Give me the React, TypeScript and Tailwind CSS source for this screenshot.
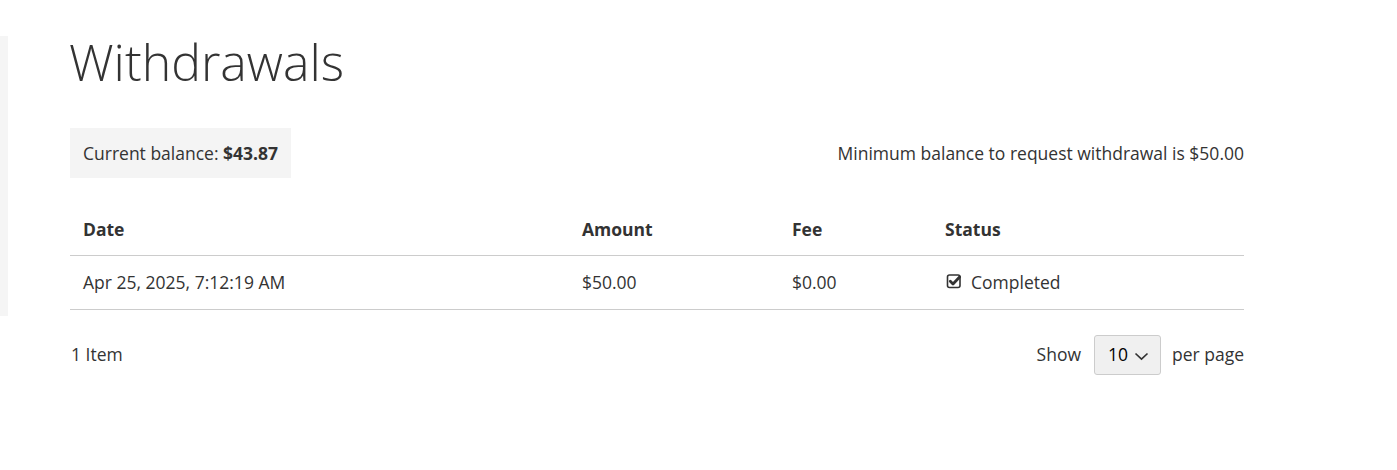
function CheckIcon() {
  return (
    <svg width="16" height="16" viewBox="0 0 16 16" className="mr-[9px] -mt-[1px]">
      <rect x="1.5" y="2" width="12.5" height="12.5" rx="2" fill="none" stroke="#333" strokeWidth="1.6" />
      <path d="M4.3 8.3 L7 11 L13.6 4" fill="none" stroke="#333" strokeWidth="2.8" strokeLinecap="round" strokeLinejoin="round" />
    </svg>
  );
}

function Chevron() {
  return (
    <svg width="15" height="9" viewBox="0 0 15 9" className="ml-[6px] mt-[4px]">
      <path d="M1.5 1.5 L7.5 7.2 L13.5 1.5" fill="none" stroke="#333" strokeWidth="1.7" />
    </svg>
  );
}

export default function App() {
  return (
    <div className="flex bg-white text-[#333] h-[470px]" style={{ fontFamily: '"Open Sans", sans-serif' }}>
      <div className="w-[8px] h-[280px] mt-[36px] bg-[#f5f5f5] shrink-0" />
      <div className="w-[1174px] ml-[62px] pt-[22px]">
        <h1 className="text-[50px] font-light leading-[80px] text-[#333] -ml-[1px]">Withdrawals</h1>
        <div className="flex justify-between items-center mt-[26px] text-[17.5px]">
          <div className="bg-[#f4f4f4] h-[50px] px-[13px] flex items-center">
            Current balance:&nbsp;<b className="font-bold">$43.87</b>
          </div>
          <div>Minimum balance to request withdrawal is $50.00</div>
        </div>
        <table className="w-full mt-[25px] text-[17.5px] border-collapse">
          <thead>
            <tr className="border-b border-[#ccc] h-[52px] text-left">
              <th className="font-bold pl-[13px] w-[512px]">Date</th>
              <th className="font-bold w-[210px]">Amount</th>
              <th className="font-bold w-[153px]">Fee</th>
              <th className="font-bold">Status</th>
            </tr>
          </thead>
          <tbody>
            <tr className="border-b border-[#ccc] h-[54px]">
              <td className="pl-[13px]">Apr 25, 2025, 7:12:19 AM</td>
              <td>$50.00</td>
              <td>$0.00</td>
              <td>
                <span className="inline-flex items-center pl-[1px]">
                  <CheckIcon />
                  Completed
                </span>
              </td>
            </tr>
          </tbody>
        </table>
        <div className="flex justify-between items-center mt-[25px] text-[17.5px]">
          <div className="pl-[1px]">1 Item</div>
          <div className="flex items-center">
            <span>Show</span>
            <div className="ml-[13px] mr-[11px] h-[40px] w-[67px] bg-[#f0f0f0] border border-[#ccc] rounded-[3px] flex items-center pl-[13px] text-[#000]">
              10
              <Chevron />
            </div>
            <span>per page</span>
          </div>
        </div>
      </div>
    </div>
  );
}
